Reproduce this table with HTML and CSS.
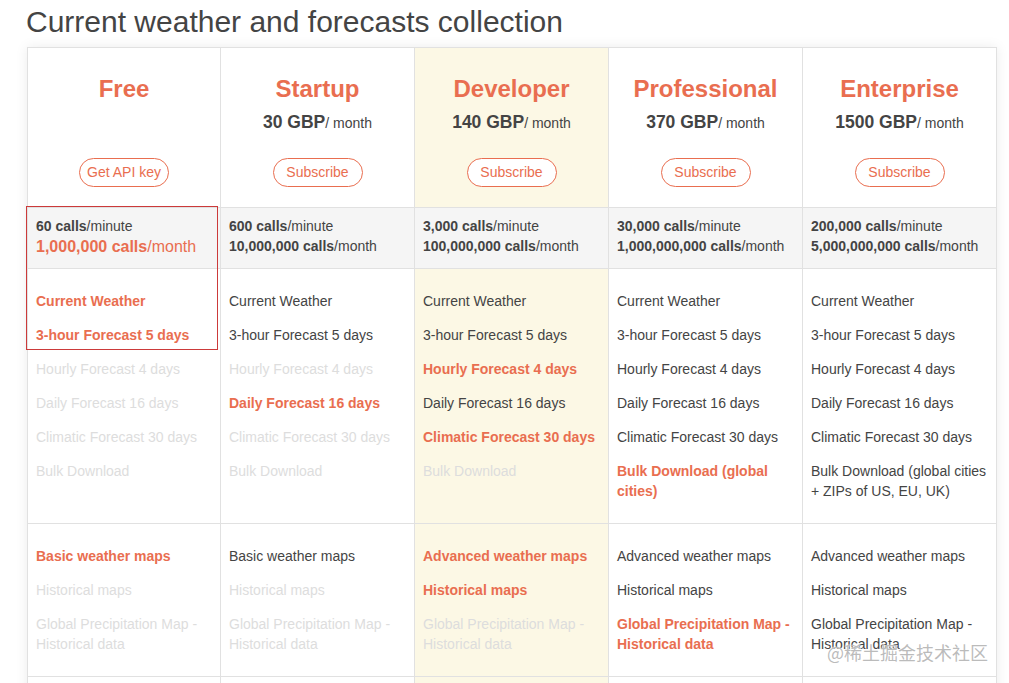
FILE: index.html
```html
<!DOCTYPE html>
<html lang="en">
<head>
<meta charset="utf-8">
<title>Current weather and forecasts collection</title>
<link rel="stylesheet" href="styles.css">
</head>
<body>
<div class="page">
  <h1 class="title">Current weather and forecasts collection</h1>
  <div class="plans">
    <div class="grid">
      <!-- header row -->
      <div class="cell head">
        <div class="plan-name">Free</div>
        <a class="btn">Get API key</a>
      </div>
      <div class="cell head">
        <div class="plan-name">Startup</div>
        <div class="price"><b>30 GBP</b>/ month</div>
        <a class="btn">Subscribe</a>
      </div>
      <div class="cell head dev">
        <div class="plan-name">Developer</div>
        <div class="price"><b>140 GBP</b>/ month</div>
        <a class="btn">Subscribe</a>
      </div>
      <div class="cell head">
        <div class="plan-name">Professional</div>
        <div class="price"><b>370 GBP</b>/ month</div>
        <a class="btn">Subscribe</a>
      </div>
      <div class="cell head">
        <div class="plan-name">Enterprise</div>
        <div class="price"><b>1500 GBP</b>/ month</div>
        <a class="btn">Subscribe</a>
      </div>

      <!-- calls row -->
      <div class="cell calls">
        <div><b>60 calls</b>/minute</div>
        <div class="big hl"><b>1,000,000 calls</b>/month</div>
      </div>
      <div class="cell calls">
        <div><b>600 calls</b>/minute</div>
        <div><b>10,000,000 calls</b>/month</div>
      </div>
      <div class="cell calls">
        <div><b>3,000 calls</b>/minute</div>
        <div><b>100,000,000 calls</b>/month</div>
      </div>
      <div class="cell calls">
        <div><b>30,000 calls</b>/minute</div>
        <div><b>1,000,000,000 calls</b>/month</div>
      </div>
      <div class="cell calls">
        <div><b>200,000 calls</b>/minute</div>
        <div><b>5,000,000,000 calls</b>/month</div>
      </div>

      <!-- API features row -->
      <ul class="cell list">
        <li class="hl">Current Weather</li>
        <li class="hl">3-hour Forecast 5 days</li>
        <li class="off">Hourly Forecast 4 days</li>
        <li class="off">Daily Forecast 16 days</li>
        <li class="off">Climatic Forecast 30 days</li>
        <li class="off">Bulk Download</li>
      </ul>
      <ul class="cell list">
        <li>Current Weather</li>
        <li>3-hour Forecast 5 days</li>
        <li class="off">Hourly Forecast 4 days</li>
        <li class="hl">Daily Forecast 16 days</li>
        <li class="off">Climatic Forecast 30 days</li>
        <li class="off">Bulk Download</li>
      </ul>
      <ul class="cell list dev">
        <li>Current Weather</li>
        <li>3-hour Forecast 5 days</li>
        <li class="hl">Hourly Forecast 4 days</li>
        <li>Daily Forecast 16 days</li>
        <li class="hl">Climatic Forecast 30 days</li>
        <li class="off">Bulk Download</li>
      </ul>
      <ul class="cell list">
        <li>Current Weather</li>
        <li>3-hour Forecast 5 days</li>
        <li>Hourly Forecast 4 days</li>
        <li>Daily Forecast 16 days</li>
        <li>Climatic Forecast 30 days</li>
        <li class="hl">Bulk Download (global cities)</li>
      </ul>
      <ul class="cell list">
        <li>Current Weather</li>
        <li>3-hour Forecast 5 days</li>
        <li>Hourly Forecast 4 days</li>
        <li>Daily Forecast 16 days</li>
        <li>Climatic Forecast 30 days</li>
        <li>Bulk Download (global cities + ZIPs of US, EU, UK)</li>
      </ul>

      <!-- maps row -->
      <ul class="cell list">
        <li class="hl">Basic weather maps</li>
        <li class="off">Historical maps</li>
        <li class="off">Global Precipitation Map - Historical data</li>
      </ul>
      <ul class="cell list">
        <li>Basic weather maps</li>
        <li class="off">Historical maps</li>
        <li class="off">Global Precipitation Map - Historical data</li>
      </ul>
      <ul class="cell list dev">
        <li class="hl">Advanced weather maps</li>
        <li class="hl">Historical maps</li>
        <li class="off">Global Precipitation Map - Historical data</li>
      </ul>
      <ul class="cell list">
        <li>Advanced weather maps</li>
        <li>Historical maps</li>
        <li class="hl">Global Precipitation Map - Historical data</li>
      </ul>
      <ul class="cell list">
        <li>Advanced weather maps</li>
        <li>Historical maps</li>
        <li>Global Precipitation Map - Historical data</li>
      </ul>

      <!-- next row, begins at the bottom edge -->
      <div class="cell spacer"></div>
      <div class="cell spacer"></div>
      <div class="cell spacer dev"></div>
      <div class="cell spacer"></div>
      <div class="cell spacer"></div>
    </div>
    <div class="highlight"></div>
  </div>
</div>
<div class="watermark">@稀土掘金技术社区</div>
</body>
</html>
```

FILE: styles.css
```css
html, body {
  margin: 0;
  padding: 0;
  background: #ffffff;
}

body {
  font-family: "Liberation Sans", Arial, sans-serif;
  color: #444444;
  overflow: hidden;
  height: 683px;
  position: relative;
}

.page {
  padding: 2px 0 0 27px;
  width: 970px;
}

.title {
  margin: 0 0 5px -1px;
  font-size: 30px;
  line-height: 40px;
  font-weight: normal;
  color: #444444;
}

.plans {
  position: relative;
  box-shadow: 0 0 12px rgba(0, 0, 0, 0.08);
}

.grid {
  display: grid;
  grid-template-columns: 193px repeat(4, 194px);
  border-top: 1px solid #e1e1e1;
  border-left: 1px solid #e1e1e1;
  background: #ffffff;
}

.cell {
  border-right: 1px solid #e1e1e1;
  border-bottom: 1px solid #e1e1e1;
  margin: 0;
  min-width: 0;
}

.dev {
  background: #fcf8e5;
}

.head {
  height: 159px;
  box-sizing: content-box;
  display: flex;
  flex-direction: column;
  align-items: center;
  padding: 0;
}

.plan-name {
  margin-top: 27px;
  font-size: 24px;
  line-height: 28px;
  font-weight: bold;
  color: #e96e50;
}

.price {
  margin-top: 9px;
  font-size: 14px;
  line-height: 20px;
  color: #444444;
}

.price b {
  font-size: 17.5px;
}

.btn {
  margin-top: auto;
  margin-bottom: 20px;
  box-sizing: border-box;
  width: 90px;
  height: 29px;
  border: 1px solid #e96e50;
  border-radius: 15px;
  font-size: 14px;
  line-height: 27px;
  text-align: center;
  color: #e96e50;
  background: #ffffff;
}

.calls {
  background: #f5f5f5;
  padding: 8px 8px 12px;
  font-size: 14px;
  line-height: 20px;
  color: #444444;
}

.calls .big {
  font-size: 16px;
  line-height: 20px;
  padding-top: 1px;
  margin-bottom: -1px;
}

.calls .hl {
  color: #e96e50;
}

.list {
  list-style: none;
  padding: 22px 8px 8px;
  display: flex;
  flex-direction: column;
  font-size: 14px;
  line-height: 20px;
}

.list li {
  margin-bottom: 14px;
  color: #444444;
}

.list li.hl {
  color: #e96e50;
  font-weight: bold;
}

.list li.off {
  color: #dddddd;
}

.spacer {
  height: 80px;
}

.highlight {
  position: absolute;
  left: -1px;
  top: 159px;
  width: 190px;
  height: 142px;
  border: 1px solid #cc3a3a;
  pointer-events: none;
}

.watermark {
  position: absolute;
  left: 827px;
  top: 641px;
  font-family: "Noto Sans CJK SC", "Liberation Sans", sans-serif;
  font-size: 18px;
  line-height: 22px;
  color: rgba(175, 175, 175, 0.85);
  text-shadow: 0 0 2px #ffffff, 0 0 1px #ffffff;
}
```
